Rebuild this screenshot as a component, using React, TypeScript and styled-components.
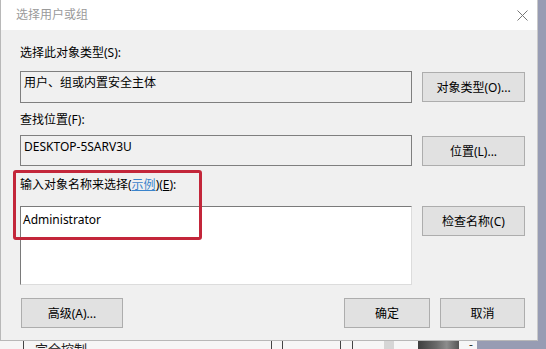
import React from 'react';
import styled, { createGlobalStyle } from 'styled-components';

const GlobalStyle = createGlobalStyle`
  html, body {
    margin: 0;
    padding: 0;
    background: #979cb3;
  }
  body {
    font-family: "Noto Sans", "Noto Sans CJK SC", sans-serif;
    font-size: 12px;
    color: #000;
  }
`;

export default function App() {
  return (
    <>
      <GlobalStyle />
      <Screen>
        <Dialog>
          <TitleBar>
            <Title>选择用户或组</Title>
            <CloseButton aria-label="关闭">
              <svg width="11" height="11" viewBox="0 0 11 11">
                <path d="M0.5 0.5 L10.5 10.5 M10.5 0.5 L0.5 10.5" stroke="#777" strokeWidth="1" fill="none" />
              </svg>
            </CloseButton>
          </TitleBar>

          <Body>
            <Section $top={15} $gap={10}>
              <Label>选择此对象类型(S):</Label>
              <Row>
                <Field $height={32}>用户、组或内置安全主体</Field>
                <Button $offset={1}>对象类型(O)...</Button>
              </Row>
            </Section>

            <Section $top={9} $gap={7}>
              <Label>查找位置(F):</Label>
              <Row>
                <Field $height={31}>DESKTOP-5SARV3U</Field>
                <Button $offset={1}>位置(L)...</Button>
              </Row>
            </Section>

            <Section $top={11} $gap={13}>
              <Label>
                输入对象名称来选择(<Link>示例</Link>)(<u>E</u>):
              </Label>
              <Row>
                <NameBox>Administrator</NameBox>
                <Button>检查名称(C)</Button>
              </Row>
            </Section>

            <Footer>
              <Button $width={102}>高级(A)...</Button>
              <ButtonGroup>
                <Button $width={86}>确定</Button>
                <Button $width={85}>取消</Button>
              </ButtonGroup>
            </Footer>
          </Body>

          <Highlight />
        </Dialog>

        <BackWindow>
          <BackCell $width={23} $border={false} />
          <BackCell $width={248}>
            <BackText>完全控制</BackText>
          </BackCell>
          <BackCell $width={11} />
          <BackCell $width={58} />
          <BackCell $width={12} />
          <BackCell $width={66}>
            <TinyBox />
          </BackCell>
          <Photo />
          <BackCell $width={18} $border={false}>
            <Dash>-</Dash>
          </BackCell>
        </BackWindow>
      </Screen>
    </>
  );
}

const Screen = styled.div`
  width: 546px;
  height: 349px;
  overflow: hidden;
  display: grid;
  grid-template-rows: 341px 8px;
  background: #979cb3;
`;

const Dialog = styled.div`
  position: relative;
  width: 538px;
  box-sizing: border-box;
  background: #f0f0f0;
  border-left: 1px solid #b8b8b8;
  border-right: 1px solid #c9c9c9;
  border-bottom: 1px solid #b8b8b8;
  display: flex;
  flex-direction: column;
`;

const TitleBar = styled.div`
  height: 30px;
  flex: none;
  background: #ffffff;
  display: flex;
  align-items: center;
  justify-content: space-between;
  padding: 0 9px 0 15px;
`;

const Title = styled.span`
  color: #9a9a9a;
  font-size: 12px;
  line-height: 16px;
`;

const CloseButton = styled.div`
  width: 11px;
  height: 11px;
  display: flex;
`;

const Body = styled.div`
  padding: 0 12px 0 19px;
  display: flex;
  flex-direction: column;
`;

const Section = styled.div<{ $top: number; $gap: number }>`
  margin-top: ${(p) => p.$top}px;
  display: flex;
  flex-direction: column;
  gap: ${(p) => p.$gap}px;
`;

const Label = styled.div`
  line-height: 16px;
  height: 16px;
  white-space: nowrap;
`;

const Link = styled.span`
  color: #3a84cc;
  text-decoration: underline;
`;

const Row = styled.div`
  display: grid;
  grid-template-columns: 392px 103px;
  column-gap: 10px;
  align-items: start;
`;

const Field = styled.div<{ $height: number }>`
  height: ${(p) => p.$height}px;
  box-sizing: border-box;
  border: 1px solid #7f7f7f;
  background: #f0f0f0;
  padding: 3px 3px;
  line-height: 16px;
`;

const NameBox = styled.div`
  height: 79px;
  box-sizing: border-box;
  background: #ffffff;
  border-top: 1px solid #7a7a7a;
  border-left: 1px solid #7a7a7a;
  border-right: 1px solid #dcdcdc;
  border-bottom: 1px solid #dcdcdc;
  padding: 5px 2px;
  line-height: 16px;
`;

const Button = styled.div<{ $offset?: number; $width?: number }>`
  margin-top: ${(p) => p.$offset ?? 0}px;
  width: ${(p) => (p.$width ? `${p.$width}px` : 'auto')};
  height: 30px;
  box-sizing: border-box;
  background: #e1e1e1;
  border: 1px solid #adadad;
  display: flex;
  align-items: center;
  justify-content: center;
  white-space: nowrap;
`;

const Footer = styled.div`
  margin-top: 13px;
  display: flex;
  justify-content: space-between;
  padding-left: 1px;
`;

const ButtonGroup = styled.div`
  display: flex;
  gap: 10px;
`;

const Highlight = styled.div`
  position: absolute;
  left: 12px;
  top: 170px;
  width: 189px;
  height: 70px;
  box-sizing: border-box;
  border: 3px solid #c3263a;
  border-radius: 3px;
  pointer-events: none;
`;

const BackWindow = styled.div`
  width: 477px;
  display: flex;
  background: #f6f6f6;
  overflow: hidden;
`;

const BackCell = styled.div<{ $width: number; $border?: boolean }>`
  width: ${(p) => p.$width}px;
  flex: none;
  box-sizing: border-box;
  border-left: ${(p) => (p.$border === false ? 'none' : '1px solid #444')};
  position: relative;
  overflow: hidden;
`;

const BackText = styled.div`
  padding-left: 11px;
  margin-top: 0px;
  font-size: 13px;
  line-height: 16px;
  color: #222;
`;

const TinyBox = styled.div`
  margin: 0 0 0 31px;
  width: 10px;
  height: 8px;
  background: #d6d6d6;
`;

const Photo = styled.div`
  width: 41px;
  flex: none;
  background: linear-gradient(90deg, #3e3e3e 0%, #6a6a6a 45%, #8d8d8d 70%, #555 100%);
`;

const Dash = styled.div`
  padding-left: 10px;
  line-height: 8px;
  font-size: 12px;
  color: #333;
`;
